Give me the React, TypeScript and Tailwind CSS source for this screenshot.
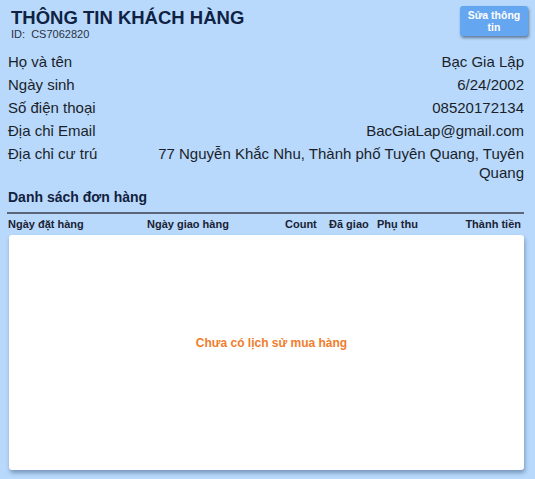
import React from "react";

const rows: [string, string][] = [
  ["Họ và tên", "Bạc Gia Lập"],
  ["Ngày sinh", "6/24/2002"],
  ["Số điện thoại", "08520172134"],
  ["Địa chỉ Email", "BacGiaLap@gmail.com"],
  ["Địa chỉ cư trú", "77 Nguyễn Khắc Nhu, Thành phố Tuyên Quang, Tuyên Quang"],
];

export default function App() {
  return (
    <div
      className="w-[535px] h-[479px] bg-[#b8d9fc] text-[#1b1f2a] overflow-hidden flex flex-col"
      style={{ fontFamily: '"Liberation Sans", Arial, sans-serif' }}
    >
      <div className="flex justify-between pl-[11px] pr-[7px] pt-[6px]">
        <div className="flex flex-col">
          <div className="text-[18.5px] leading-[22px] font-bold text-[#0f2244] pt-[1px]">THÔNG TIN KHÁCH HÀNG</div>
          <div className="text-[11px] leading-[13px] text-[#2a3140] -mt-[1px]">ID:&nbsp;&nbsp;CS7062820</div>
        </div>
        <button className="w-[68px] h-[30px] rounded-[3px] bg-[#65a6f0] text-white text-[10.5px] leading-[12px] font-bold shadow-[1px_2px_3px_rgba(40,60,90,0.6)] flex items-center justify-center text-center px-1">
          Sửa thông tin
        </button>
      </div>
      <div className="flex flex-col px-[8px] pt-[11px] gap-[4px]">
        {rows.map(([k, v]) => (
          <div key={k} className="flex justify-between gap-[20px] text-[15px] leading-[19px]">
            <div className="whitespace-nowrap">{k}</div>
            <div className="text-right max-w-[385px] pr-[3px]">{v}</div>
          </div>
        ))}
      </div>
      <div className="px-[7px] mt-[6px]">
        <div className="text-[14px] leading-[18px] font-bold text-[#12213d] pl-[1px]">Danh sách đơn hàng</div>
        <div className="h-[2px] bg-[#5b6778] mt-[6px] mr-[4px]" />
        <div className="flex text-[11px] leading-[14px] font-bold text-[#1b2233] mt-[3px] pl-[1px] pr-[7px]">
          <div className="w-[139px]">Ngày đặt hàng</div>
          <div className="w-[138px]">Ngày giao hàng</div>
          <div className="w-[44px]">Count</div>
          <div className="w-[48px]">Đã giao</div>
          <div>Phụ thu</div>
          <div className="ml-auto">Thành tiền</div>
        </div>
      </div>
      <div className="ml-[9px] mr-[11px] mt-[4px] h-[235px] pb-[20px] pl-[10px] bg-white rounded-[3px] shadow-[1px_3px_4px_rgba(40,70,110,0.45)] flex items-center justify-center">
        <div className="text-[12px] font-bold text-[#f07d2c]">Chưa có lịch sử mua hàng</div>
      </div>
    </div>
  );
}
